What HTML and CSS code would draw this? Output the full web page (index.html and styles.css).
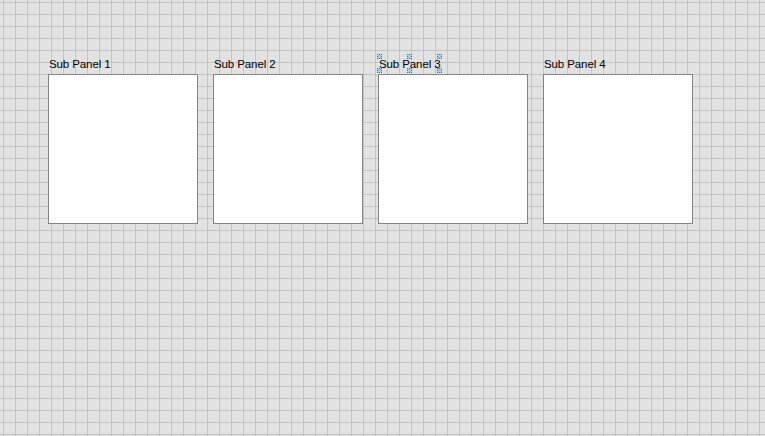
FILE: index.html
```html
<!DOCTYPE html>
<html lang="en">
<head>
    <meta charset="UTF-8">
    <meta name="viewport" content="width=device-width, initial-scale=1.0">
    <title>Sub Panels</title>
    <link rel="stylesheet" href="styles.css">
</head>
<body>
    <div class="canvas">
        <div class="panel">
            <div class="label">Sub Panel 1</div>
            <div class="box"></div>
        </div>
        <div class="panel">
            <div class="label">Sub Panel 2</div>
            <div class="box"></div>
        </div>
        <div class="panel">
            <div class="label selected">
                <span class="text">Sub Panel 3</span>
                <!-- selection handles -->
                <span class="handle tl"></span>
                <span class="handle tm"></span>
                <span class="handle tr"></span>
                <span class="handle bl"></span>
                <span class="handle bm"></span>
                <span class="handle br"></span>
            </div>
            <div class="box"></div>
        </div>
        <div class="panel">
            <div class="label">Sub Panel 4</div>
            <div class="box"></div>
        </div>
    </div>
</body>
</html>
```

FILE: styles.css
```css
html, body {
    margin: 0;
    padding: 0;
    height: 100%;
}
body {
    font-family: "Liberation Sans", Arial, sans-serif;
    background-color: #e2e2e2;
    background-image:
        linear-gradient(to right, #c4c4c4 1px, transparent 1px),
        linear-gradient(to bottom, #c4c4c4 1px, transparent 1px);
    background-size: 12px 12px;
    background-position: 3px 2px;
}
.canvas {
    display: flex;
    gap: 15px;
    padding: 56px 0 0 48px;
}
.panel {
    display: flex;
    flex-direction: column;
    width: 150px;
}
.label {
    height: 18px;
    line-height: 16px;
    font-size: 11.5px;
    color: #000;
    padding-left: 1px;
    white-space: nowrap;
    letter-spacing: -0.1px;
}
.box {
    width: 148px;
    height: 148px;
    background: #fff;
    border: 1px solid #858585;
}
.selected {
    position: relative;
    width: 62px;
}
.handle {
    position: absolute;
    width: 3px;
    height: 3px;
    border: 1px dotted #1f86bd;
    background: #9fd0ea;
}
.tl { left: -1px; top: -2px; }
.tm { left: 29px; top: -2px; }
.tr { left: 59px; top: -2px; }
.bl { left: -1px; top: 12px; }
.bm { left: 29px; top: 12px; }
.br { left: 59px; top: 12px; }
```
